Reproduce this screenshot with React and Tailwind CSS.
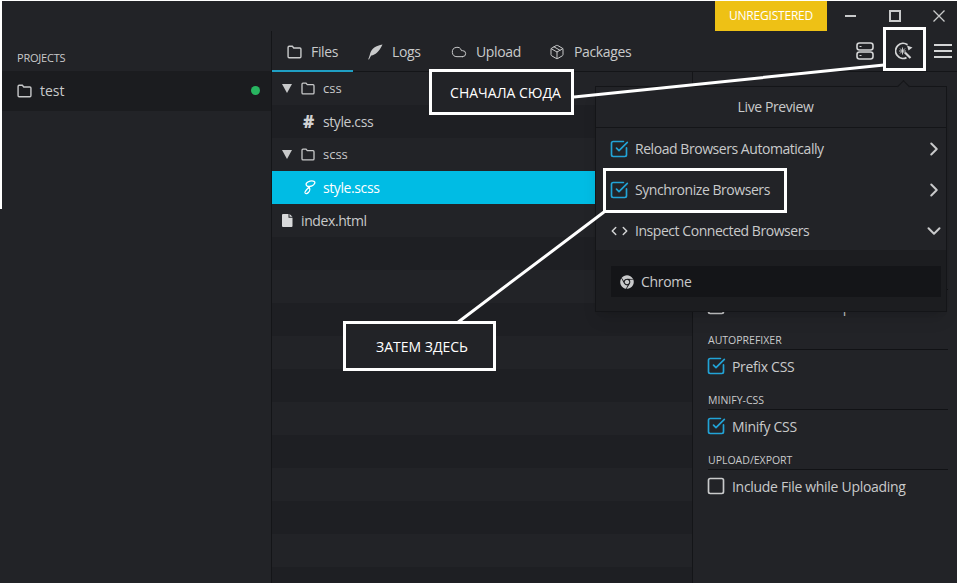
import React from 'react';
import { SquareCheckBig, Square, ChevronRight, ChevronDown, ChevronLeft, Cloud, Package } from 'lucide-react';
import { FaChrome } from 'react-icons/fa';

const FolderIcon = ({ className = '' }) => (
  <svg viewBox="0 0 14 13" className={className} fill="none" stroke="currentColor" strokeWidth="1.3">
    <path d="M1 2.2c0-.7.4-1.1 1-1.1h3l1.3 1.6H12c.6 0 1 .4 1 1v7c0 .7-.4 1.2-1 1.2H2c-.6 0-1-.5-1-1.2z" />
  </svg>
);

const FeatherIcon = () => (
  <svg viewBox="0 0 16 16" className="w-[16px] h-[16px]" fill="currentColor">
    <path d="M15.500.5C9 1.500 4.500 4.500 3 10c-.4 1.500-.8 3-1.800 5.200l.8.300c.8-1.700 1.500-3 2.300-4 3.900-.4 7.900-3.800 11.200-11z" />
  </svg>
);

const FileIcon = () => (
  <svg viewBox="0 0 11 13" className="w-[11px] h-[13px]" fill="currentColor">
    <path d="M1 0h5.500v3.700H10.500V12a1 1 0 0 1-1 1H1a1 1 0 0 1-1-1V1a1 1 0 0 1 1-1zM7.500 0l3 2.800h-3z" />
  </svg>
);

const SassIcon = () => (
  <svg viewBox="0 0 13 15" className="w-[13px] h-[15px]" fill="none" stroke="currentColor" strokeWidth="1.300">
    <path d="M6 7.200C3.500 6 2.500 4.800 3.500 3.200 4.800 1.200 9 .4 11 1.300c1.700.9.500 3.700-2 4.600-1.500.6-3 .6-3.800.2" />
    <path d="M6 7.200c1.300 1.300.9 3.700-.6 5.300-1.200 1.300-3 1.500-3.400.4-.4-1.400 1.500-3.400 4-5.700" />
  </svg>
);

const ServerIcon = () => (
  <svg viewBox="0 0 18 18" className="w-[18px] h-[18px]" fill="none" stroke="currentColor" strokeWidth="1.600">
    <rect x="1" y="1" width="16" height="7" rx="2.500" />
    <rect x="1" y="10" width="16" height="7" rx="2.500" />
    <path d="M3.500 4.500h2M3.500 13.500h2" strokeWidth="1.200" />
  </svg>
);

const LivePreviewIcon = () => (
  <svg viewBox="0 0 18 18" className="w-[18px] h-[18px]" fill="none" stroke="currentColor">
    <path d="M12.500 2.800A7.500 7.500 0 1 0 11.500 15.600" strokeWidth="1.800" />
    <path d="M12 3.500L17.500 5.500 13.500 8.500z" fill="currentColor" stroke="none" />
    <path d="M10 10.500l5.500 5.500" strokeWidth="2.200" />
    <path d="M7.500 5.500v7M4 9h7M5 6.500l5 5M10 6.500l-5 5" strokeWidth="0.900" />
  </svg>
);

const HamburgerIcon = () => (
  <svg viewBox="0 0 18 14" className="w-[18px] h-[14px]" fill="none" stroke="currentColor" strokeWidth="2">
    <path d="M0 1h18M0 7h18M0 13h18" />
  </svg>
);

const CheckOn = () => <SquareCheckBig size={20} strokeWidth={2} className="text-[#22a3d6] shrink-0" />;

const tabs = [
  { name: 'Files', icon: <FolderIcon className="w-[15px] h-[14px]" />, width: 'w-[81px]', active: true },
  { name: 'Logs', icon: <FeatherIcon />, width: 'w-[84px]' },
  { name: 'Upload', icon: <Cloud size={16} strokeWidth={1.500} />, width: 'w-[98px]' },
  { name: 'Packages', icon: <Package size={16} strokeWidth={1.500} />, width: 'w-[110px]' },
];

// tree rows, the rest of the list is just empty stripes
const files = [
  { name: 'css', kind: 'folder' },
  { name: 'style.css', kind: 'css' },
  { name: 'scss', kind: 'folder' },
  { name: 'style.scss', kind: 'scss', selected: true },
  { name: 'index.html', kind: 'file' },
  ...Array.from({ length: 11 }, () => ({ name: '', kind: 'empty' })),
];

const FileRow = ({ file, index }) => {
  const stripe = index % 2 === 0 ? 'bg-[#222327]' : 'bg-[#1e1f23]';
  return (
    <div className={`h-[33px] shrink-0 flex items-center text-[14px] tracking-[-0.4px] ${file.selected ? 'bg-[#00bce4] text-white' : `${stripe} text-[#c9cacb]`}`}>
      {file.kind === 'folder' && (
        <>
          <span className="ml-[10px] w-0 h-0 border-x-[5.500px] border-x-transparent border-t-[9px] border-t-[#c8c9ca]" />
          <FolderIcon className="ml-[9px] w-[14px] h-[13px] text-[#c8c9ca]" />
          <span className="ml-[8px] pt-[1px] text-[13px] tracking-normal">{file.name}</span>
        </>
      )}
      {file.kind === 'css' && (
        <>
          <span className="ml-[29px] w-[15px] text-center font-extrabold text-[17px] text-[#d0d1d2]">#</span>
          <span className="ml-[7px]">{file.name}</span>
        </>
      )}
      {file.kind === 'scss' && (
        <>
          <span className="ml-[30px] w-[14px] flex justify-center"><SassIcon /></span>
          <span className="ml-[7px] font-medium">{file.name}</span>
        </>
      )}
      {file.kind === 'file' && (
        <>
          <span className="ml-[10px] text-[#d8d9da]"><FileIcon /></span>
          <span className="ml-[8px]">{file.name}</span>
        </>
      )}
    </div>
  );
};

const SettingGroup = ({ title, label, checked }) => (
  <div className="h-[60px] shrink-0">
    <div className="h-[23px] flex items-end text-[10.500px] text-[#c9cacb] border-b border-[#111215]">{title}</div>
    <div className="h-[32px] flex items-center gap-[6px] -ml-[2px] text-[14px] tracking-[-0.3px] text-[#c9cacb]">
      {checked ? <CheckOn /> : <Square size={20} strokeWidth={2} className="text-[#c9cacb] shrink-0" />}
      {label}
    </div>
  </div>
);

const PreviewRow = ({ icon, label, open }) => (
  <div className="h-[41px] flex items-center pl-[13px] pr-[1px] text-[14px] tracking-[-0.45px] text-[#c9cacb]">
    <span className="w-[20px] flex justify-center">{icon}</span>
    <span className="ml-[6px] flex-1">{label}</span>
    {open ? <ChevronDown size={22} strokeWidth={2.200} /> : <ChevronRight size={22} strokeWidth={2.200} />}
  </div>
);

const Note = ({ className, children }) => (
  <div className={`absolute border-[3px] border-white bg-[#222327] flex items-center justify-center text-[14px] text-white ${className}`}>
    {children}
  </div>
);

export default function App() {
  return (
    <div className="relative w-[957px] h-[583px] overflow-hidden bg-[#222327] font-['Open_Sans',sans-serif]">
      {/* bit of the desktop showing around the window */}
      <div className="absolute left-0 top-0 w-[2px] h-[209px] bg-white" />
      <div className="absolute left-0 top-0 w-full h-px bg-white" />

      <div className="h-[31px] flex justify-end">
        <div className="mt-px w-[112px] h-[30px] flex items-center justify-center bg-[#eec115] text-white font-medium text-[12px] tracking-[-0.2px]">
          UNREGISTERED
        </div>
        <div className="w-[130px] flex items-center text-[#c9cacb]">
          <span className="ml-[18px] w-[11px] h-[2px] bg-[#c9cacb]" />
          <span className="ml-[33px] w-[12px] h-[12px] border-2 border-[#c9cacb]" />
          <svg viewBox="0 0 12 12" className="ml-[32px] w-[12px] h-[12px]" fill="none" stroke="currentColor" strokeWidth="1.300">
            <path d="M.500.500l11 11M11.500.500l-11 11" />
          </svg>
        </div>
      </div>

      <div className="flex h-[552px]">
        <aside className="w-[271px] shrink-0 pl-[2px]">
          <div className="h-[40px] flex items-end pb-[5px] pl-[15px] text-[11px] text-[#c9cacb] tracking-[-0.2px]">PROJECTS</div>
          <div className="h-[40px] -ml-[2px] pl-[17px] pr-[11px] pb-[1px] flex items-center bg-[#1b1c1f] text-[#c9cacb] text-[14px]">
            <FolderIcon className="w-[15px] h-[14px] text-[#c8c9ca]" />
            <span className="ml-[8px] flex-1">test</span>
            <span className="w-[9px] h-[9px] rounded-full bg-[#28b560]" />
          </div>
        </aside>

        <main className="flex-1 min-w-0 flex flex-col border-l border-[#141518]">
          <div className="h-[41px] shrink-0 flex items-stretch border-b border-[#141518] text-[#c9cacb]">
            {tabs.map((tab) => (
              <div key={tab.name} className={`${tab.width} flex items-center pl-[14px] pt-[2px] gap-[9px] text-[14px] tracking-[-0.35px] border-b-2 -mb-px ${tab.active ? 'border-[#1f9fc4]' : 'border-transparent'}`}>
                <span className="w-[16px] flex justify-center">{tab.icon}</span>
                {tab.name}
              </div>
            ))}
            <div className="ml-auto flex items-center pr-[5px] text-[#d4d5d6]">
              <ServerIcon />
              <span className="ml-[21px]"><LivePreviewIcon /></span>
              <span className="ml-[21px]"><HamburgerIcon /></span>
            </div>
          </div>

          <div className="flex-1 min-h-0 flex">
            <div className="w-[420px] shrink-0 flex flex-col overflow-hidden">
              {files.map((file, i) => <FileRow key={i} file={file} index={i} />)}
            </div>
            <div className="flex-1 min-w-0 border-l border-[#141518] pl-[15px] pr-[9px] pt-[195px]">
              <SettingGroup title="SOURCE MAPS" label="Create Source Map" />
              <SettingGroup title="AUTOPREFIXER" label="Prefix CSS" checked />
              <SettingGroup title="MINIFY-CSS" label="Minify CSS" checked />
              <SettingGroup title="UPLOAD/EXPORT" label="Include File while Uploading" />
            </div>
          </div>
        </main>
      </div>

      {/* Live Preview popover */}
      <div className="absolute left-[595px] top-[86px] w-[352px] h-[226px] bg-[#222327] border border-[#141518] shadow-lg">
        <div className="absolute right-[38px] -top-[5px] w-[9px] h-[9px] rotate-45 bg-[#222327] border-l border-t border-[#141518]" />
        <div className="h-[41px] pl-[9px] pb-[2px] flex items-center justify-center text-[14px] tracking-[-0.4px] text-[#c9cacb] border-b border-[#141518]">Live Preview</div>
        <PreviewRow icon={<CheckOn />} label="Reload Browsers Automatically" />
        <PreviewRow icon={<CheckOn />} label="Synchronize Browsers" />
        <PreviewRow icon={<span className="flex text-[#d4d5d6]"><ChevronLeft size={14} strokeWidth={2.500} className="-mr-[3px]" /><ChevronRight size={14} strokeWidth={2.500} /></span>} label="Inspect Connected Browsers" open />
        <div className="h-[61px] -mt-[21px] translate-y-[20px] flex items-center pl-[15px] pr-[5px] pt-[2px] bg-[#1c1d20]">
          <div className="w-full h-[31px] flex items-center gap-[7px] pl-[9px] bg-[#141518] text-[14px] tracking-[-0.3px] text-[#c9cacb]">
            <FaChrome size={14} className="text-[#c9cacb]" />
            Chrome
          </div>
        </div>
      </div>

      {/* annotations drawn on top of the screenshot */}
      <svg className="absolute inset-0 w-full h-full pointer-events-none" viewBox="0 0 957 583">
        <path d="M574 97L884 65M604 212L457 323" stroke="#fff" strokeWidth="3" fill="none" />
      </svg>
      <Note className="left-[429px] top-[69px] w-[145px] h-[46px] pl-[8px]">СНАЧАЛА СЮДА</Note>
      <Note className="left-[343px] top-[321px] w-[153px] h-[50px] pl-[5px]">ЗАТЕМ ЗДЕСЬ</Note>
      <div className="absolute left-[883px] top-[27px] w-[43px] h-[44px] border-[3px] border-white" />
      <div className="absolute left-[603px] top-[168px] w-[184px] h-[45px] border-[3px] border-white" />
    </div>
  );
}
